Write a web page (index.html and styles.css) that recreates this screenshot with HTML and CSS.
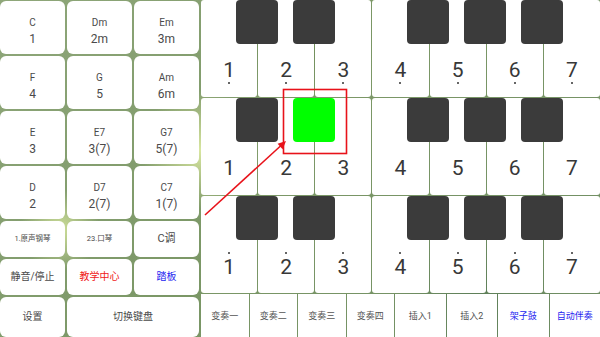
FILE: index.html
```html
<!DOCTYPE html>
<html>
<head>
<meta charset="utf-8">
<link rel="stylesheet" href="styles.css">
</head>
<body>
<div class="app">
  <div class="chords">
    <div class="btn chord"><span class="name">C</span><span class="num">1</span></div>
    <div class="btn chord"><span class="name">Dm</span><span class="num">2m</span></div>
    <div class="btn chord"><span class="name">Em</span><span class="num">3m</span></div>
    <div class="btn chord"><span class="name">F</span><span class="num">4</span></div>
    <div class="btn chord"><span class="name">G</span><span class="num">5</span></div>
    <div class="btn chord"><span class="name">Am</span><span class="num">6m</span></div>
    <div class="btn chord"><span class="name">E</span><span class="num">3</span></div>
    <div class="btn chord"><span class="name">E7</span><span class="num">3(7)</span></div>
    <div class="btn chord"><span class="name">G7</span><span class="num">5(7)</span></div>
    <div class="btn chord"><span class="name">D</span><span class="num">2</span></div>
    <div class="btn chord"><span class="name">D7</span><span class="num">2(7)</span></div>
    <div class="btn chord"><span class="name">C7</span><span class="num">1(7)</span></div>
    <div class="btn tiny">1.原声钢琴</div>
    <div class="btn tiny">23.口琴</div>
    <div class="btn key">C调</div>
    <div class="btn">静音/停止</div>
    <div class="btn red">教学中心</div>
    <div class="btn blue">踏板</div>
    <div class="btn">设置</div>
    <div class="btn wide">切换键盘</div>
  </div>
  <div class="right">
    <div class="piano">
      <div class="white"><span class="slot-top"></span><span class="digit">1</span><span class="slot-bottom"><i class="dot"></i></span></div>
      <div class="white"><span class="slot-top"></span><span class="digit">2</span><span class="slot-bottom"><i class="dot"></i></span></div>
      <div class="white"><span class="slot-top"></span><span class="digit">3</span><span class="slot-bottom"><i class="dot"></i></span></div>
      <div class="white"><span class="slot-top"></span><span class="digit">4</span><span class="slot-bottom"><i class="dot"></i></span></div>
      <div class="white"><span class="slot-top"></span><span class="digit">5</span><span class="slot-bottom"><i class="dot"></i></span></div>
      <div class="white"><span class="slot-top"></span><span class="digit">6</span><span class="slot-bottom"><i class="dot"></i></span></div>
      <div class="white"><span class="slot-top"></span><span class="digit">7</span><span class="slot-bottom"><i class="dot"></i></span></div>
      <div class="black k1"></div>
      <div class="black k2"></div>
      <div class="black k4"></div>
      <div class="black k5"></div>
      <div class="black k6"></div>
    </div>
    <div class="piano">
      <div class="white"><span class="slot-top"></span><span class="digit">1</span><span class="slot-bottom"></span></div>
      <div class="white"><span class="slot-top"></span><span class="digit">2</span><span class="slot-bottom"></span></div>
      <div class="white"><span class="slot-top"></span><span class="digit">3</span><span class="slot-bottom"></span></div>
      <div class="white"><span class="slot-top"></span><span class="digit">4</span><span class="slot-bottom"></span></div>
      <div class="white"><span class="slot-top"></span><span class="digit">5</span><span class="slot-bottom"></span></div>
      <div class="white"><span class="slot-top"></span><span class="digit">6</span><span class="slot-bottom"></span></div>
      <div class="white"><span class="slot-top"></span><span class="digit">7</span><span class="slot-bottom"></span></div>
      <div class="black k1"></div>
      <div class="black k2 on"></div>
      <div class="black k4"></div>
      <div class="black k5"></div>
      <div class="black k6"></div>
    </div>
    <div class="piano high">
      <div class="white"><span class="slot-top"><i class="dot"></i></span><span class="digit">1</span><span class="slot-bottom"></span></div>
      <div class="white"><span class="slot-top"><i class="dot"></i></span><span class="digit">2</span><span class="slot-bottom"></span></div>
      <div class="white"><span class="slot-top"><i class="dot"></i></span><span class="digit">3</span><span class="slot-bottom"></span></div>
      <div class="white"><span class="slot-top"><i class="dot"></i></span><span class="digit">4</span><span class="slot-bottom"></span></div>
      <div class="white"><span class="slot-top"><i class="dot"></i></span><span class="digit">5</span><span class="slot-bottom"></span></div>
      <div class="white"><span class="slot-top"><i class="dot"></i></span><span class="digit">6</span><span class="slot-bottom"></span></div>
      <div class="white"><span class="slot-top"><i class="dot"></i></span><span class="digit">7</span><span class="slot-bottom"></span></div>
      <div class="black k1"></div>
      <div class="black k2"></div>
      <div class="black k4"></div>
      <div class="black k5"></div>
      <div class="black k6"></div>
    </div>
    <div class="bar">
      <div class="opt">变奏一</div>
      <div class="opt">变奏二</div>
      <div class="opt">变奏三</div>
      <div class="opt">变奏四</div>
      <div class="opt ins">插入1</div>
      <div class="opt ins">插入2</div>
      <div class="opt ins blue">架子鼓</div>
      <div class="opt ins blue">自动伴奏</div>
    </div>
  </div>
  <svg class="annot" width="600" height="337" viewBox="0 0 600 337">
    <rect x="283.5" y="89.5" width="63" height="64" fill="none" stroke="#e8121a" stroke-width="1.6"/>
    <line x1="205" y1="215" x2="280.5" y2="146" stroke="#e8121a" stroke-width="1.6"/>
    <polygon points="286,141 282.6,149.2 277.6,143.8" fill="#e8121a"/>
  </svg>
</div>
</body>
</html>
```

FILE: styles.css
```css
html, body {
  margin: 0;
  padding: 0;
}

.app {
  position: relative;
  width: 600px;
  height: 337px;
  overflow: hidden;
  display: flex;
  gap: 2px;
  font-family: Roboto, "Noto Sans CJK SC", sans-serif;
  background:
    radial-gradient(circle at 200px 150px, #d8e6a0 0, rgba(216,230,160,0) 60px),
    radial-gradient(circle at 60px 230px, #cfe09a 0, rgba(207,224,154,0) 40px),
    radial-gradient(circle at 300px 20px, #6c8a56 0, rgba(108,138,86,0) 90px),
    radial-gradient(circle at 480px 300px, #5d7e58 0, rgba(93,126,88,0) 90px),
    linear-gradient(135deg, #8fa77a, #7b9766 50%, #6f8d63);
}

.chords {
  width: 199px;
  box-sizing: border-box;
  padding-top: 1px;
  display: grid;
  grid-template-columns: 65px 65px 65px;
  grid-template-rows: 53px 53px 53px 53px 36px 36px 1fr;
  gap: 2px;
}

.btn {
  background: #fff;
  border-radius: 6px;
  display: flex;
  flex-direction: column;
  align-items: center;
  justify-content: center;
  color: #4a4a4a;
  font-size: 10px;
  line-height: 12px;
}

.chord {
  box-sizing: border-box;
  padding-top: 8px;
  gap: 3px;
}

.chord .name {
  font-size: 10px;
  line-height: 12px;
}

.chord .num {
  font-size: 12px;
  line-height: 14px;
}

.tiny {
  font-size: 7.5px;
}

.key {
  font-size: 11px;
}

.red {
  color: #f01818;
}

.blue {
  color: #2424f0;
}

.wide {
  grid-column: span 2;
}

.right {
  flex: 1;
  display: flex;
  flex-direction: column;
  gap: 1px;
}

.piano {
  position: relative;
  height: 97px;
  display: flex;
  gap: 1px;
}

.white {
  flex: 1;
  background: #fff;
  border-radius: 3px;
  box-sizing: border-box;
  padding-top: 53px;
  display: flex;
  flex-direction: column;
  align-items: center;
}

.slot-top {
  height: 7px;
  box-sizing: border-box;
  padding-top: 2px;
  display: flex;
  justify-content: center;
}

.high .slot-top {
  padding-top: 3px;
}

.slot-bottom {
  height: 7px;
  box-sizing: border-box;
  padding-top: 1px;
  display: flex;
  justify-content: center;
}

.dot {
  display: block;
  width: 2px;
  height: 2px;
  border-radius: 1px;
  background: #333;
}

.digit {
  font-size: 21px;
  line-height: 21px;
  color: #383838;
}

.high .digit {
  margin-top: 1px;
}

.black {
  position: absolute;
  top: 0;
  width: 42px;
  height: 44px;
  background: #3b3b3b;
  border-radius: 4px;
}

.black.on {
  background: #00ff00;
}

.k1 { left: 35px; }
.k2 { left: 92px; }
.k4 { left: 206px; }
.k5 { left: 263px; }
.k6 { left: 320px; }

.bar {
  flex: 1;
  display: flex;
  gap: 1px;
}

.opt {
  flex: 48 1 0;
  background: #fff;
  display: flex;
  align-items: center;
  justify-content: center;
  font-size: 9px;
  color: #555;
}

.opt.ins {
  flex: 51 1 0;
}

.opt.blue {
  color: #2424f0;
}

.annot {
  position: absolute;
  left: 0;
  top: 0;
  pointer-events: none;
}
```
